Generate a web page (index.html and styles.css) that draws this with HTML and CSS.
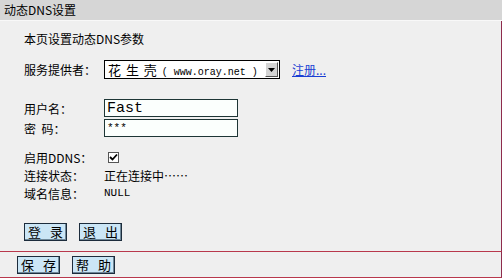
FILE: index.html
```html
<!DOCTYPE html>
<html>
<head>
    <meta charset="utf-8">
    <title>动态DNS设置</title>
    <link rel="stylesheet" href="styles.css">
</head>
<body>
<div class="page">
    <div class="title">动态DNS设置</div>

    <div class="main">
        <div class="intro">本页设置动态DNS参数</div>

        <div class="row provider">
            <span class="label">服务提供者：</span>
            <div class="fake-select">
                <span class="sel-text">花 生 壳 <span class="mono">( www.oray.net )</span></span>
                <span class="sel-btn">
                    <svg width="7" height="4" viewBox="0 0 7 4"><path d="M0 0h7L3.5 4z" fill="#000"/></svg>
                </span>
            </div>
            <a class="reg" href="#">注册...</a>
        </div>

        <div class="row user">
            <span class="label">用户名：</span>
            <input class="field big" type="text" value="Fast">
        </div>
        <div class="row pass">
            <span class="label">密&nbsp;&nbsp;码：</span>
            <input class="field small" type="text" value="***">
        </div>

        <div class="row info first">
            <span class="label">启用DDNS：</span>
            <span class="check">
                <svg width="9" height="9" viewBox="0 0 9 9"><path d="M1 4l2.5 2.5L8 1.5" fill="none" stroke="#000" stroke-width="1.8"/></svg>
            </span>
        </div>
        <div class="row info">
            <span class="label">连接状态：</span>
            <span>正在连接中……</span>
        </div>
        <div class="row info">
            <span class="label">域名信息：</span>
            <span class="null">NULL</span>
        </div>

        <div class="actions">
            <button class="btn">登 录</button>
            <button class="btn">退 出</button>
        </div>
    </div>

    <div class="bar">
        <button class="btn">保 存</button>
        <button class="btn">帮 助</button>
    </div>
</div>
</body>
</html>
```

FILE: styles.css
```css
body {
    margin: 0;
    font-family: "Noto Sans CJK SC", sans-serif;
    font-size: 12px;
    color: #000;
    background: #efefef;
}
.page {
    width: 502px;
    height: 278px;
    background: #efefef;
}
.title {
    height: 20px;
    line-height: 20px;
    padding-left: 4px;
    background: #d6d6d6;
    border-bottom: 1px solid #f8f8f8;
    font-size: 12px;
}
.main {
    box-sizing: border-box;
    height: 230px;
    padding: 10px 0 0 24px;
    border-right: 1px solid #8e2c4c;
}
.intro {
    line-height: 16px;
}
.row {
    display: flex;
    align-items: center;
}
.label {
    width: 80px;
    flex-shrink: 0;
}
.provider {
    margin-top: 13px;
    height: 19px;
}
.fake-select {
    box-sizing: border-box;
    width: 176px;
    height: 19px;
    display: flex;
    align-items: center;
    justify-content: space-between;
    background: #fff;
    border: 1px solid #000;
    padding-left: 3px;
}
.sel-text {
    font-size: 13px;
    white-space: pre;
    letter-spacing: 1px;
}
.mono {
    font-family: "Liberation Mono", monospace;
    font-size: 10px;
    letter-spacing: 0;
}
.sel-btn {
    box-sizing: border-box;
    width: 13px;
    height: 15px;
    margin-right: 1px;
    background: #d4d4d4;
    border: 1px solid;
    border-color: #fff #555 #555 #fff;
    display: flex;
    align-items: center;
    justify-content: center;
}
.reg {
    margin-left: 12px;
    color: #1a3fd4;
    text-decoration: underline;
}
.user {
    margin-top: 20px;
    height: 18px;
}
.pass {
    margin-top: 2px;
    height: 18px;
}
.field {
    box-sizing: border-box;
    width: 134px;
    height: 18px;
    margin: 0;
    padding: 0 2px;
    border: 1px solid #1d3535;
    background: #fbfffd;
    font-family: "Liberation Mono", monospace;
    outline: none;
}
.field.big {
    font-size: 15px;
}
.field.small {
    font-size: 11px;
}
.info {
    height: 18px;
}
.info.first {
    margin-top: 11px;
}
.check {
    box-sizing: border-box;
    width: 11px;
    height: 11px;
    margin-left: 4px;
    border: 1px solid #555;
    background: #fff;
    display: flex;
    align-items: center;
    justify-content: center;
}
.null {
    font-family: "Liberation Mono", monospace;
    font-size: 11px;
}
.actions {
    margin-top: 21px;
    display: flex;
    gap: 12px;
}
.btn {
    box-sizing: border-box;
    width: 43px;
    height: 18px;
    margin: 0;
    padding: 0 0 0 3px;
    background: #cbe6f6;
    border: 1px solid #1c2c3c;
    box-shadow: inset -1px -1px 0 #6f8899;
    font-family: "Noto Sans CJK SC", sans-serif;
    font-size: 13px;
    line-height: 16px;
    letter-spacing: 3px;
    color: #000;
}
.bar {
    box-sizing: border-box;
    height: 27px;
    padding: 4px 0 0 17px;
    border-top: 1px solid #b8384c;
    border-bottom: 1px solid #b8384c;
    border-right: 1px solid #8e2c4c;
    display: flex;
    align-items: flex-start;
    gap: 12px;
}
```
